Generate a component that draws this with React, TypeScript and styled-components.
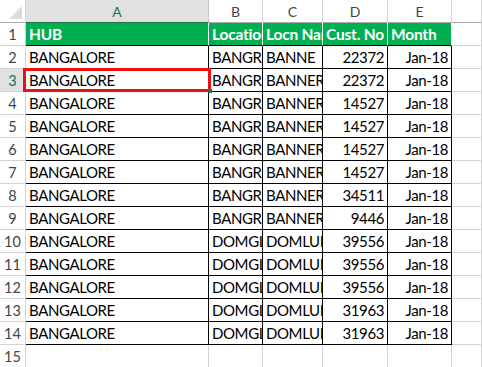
import React from "react";
import styled, { createGlobalStyle } from "styled-components";

const GlobalStyle = createGlobalStyle`
  html, body {
    margin: 0;
    padding: 0;
    background: #ffffff;
  }
`;

const columns = ["A", "B", "C", "D", "E", ""];

const headers = ["HUB", "Location", "Locn Name", "Cust. No", "Month"];

const rows: [string, string, string, string, string][] = [
  ["BANGALORE", "BANGRD", "BANNE", "22372", "Jan-18"],
  ["BANGALORE", "BANGRD", "BANNERG", "22372", "Jan-18"],
  ["BANGALORE", "BANGRD", "BANNERG", "14527", "Jan-18"],
  ["BANGALORE", "BANGRD", "BANNERG", "14527", "Jan-18"],
  ["BANGALORE", "BANGRD", "BANNERG", "14527", "Jan-18"],
  ["BANGALORE", "BANGRD", "BANNERG", "14527", "Jan-18"],
  ["BANGALORE", "BANGRD", "BANNERG", "34511", "Jan-18"],
  ["BANGALORE", "BANGRD", "BANNERG", "9446", "Jan-18"],
  ["BANGALORE", "DOMGLR", "DOMLUR", "39556", "Jan-18"],
  ["BANGALORE", "DOMGLR", "DOMLUR", "39556", "Jan-18"],
  ["BANGALORE", "DOMGLR", "DOMLUR", "39556", "Jan-18"],
  ["BANGALORE", "DOMGLR", "DOMLUR", "31963", "Jan-18"],
  ["BANGALORE", "DOMGLR", "DOMLUR", "31963", "Jan-18"],
];

const Sheet = styled.div`
  position: relative;
  display: grid;
  grid-template-columns: 26px 183px 54px 60px 65px 64px 30px;
  grid-auto-rows: 23px;
  width: 482px;
  height: 367px;
  overflow: hidden;
  font-family: Lato, "Open Sans", sans-serif;
`;

const Corner = styled.div`
  position: relative;
  box-sizing: border-box;
  background: #ffffff;
  border-right: 1px solid #d4d4d4;
  border-bottom: 1px solid #ababab;

  &::after {
    content: "";
    position: absolute;
    right: 3px;
    bottom: 3px;
    border-style: solid;
    border-width: 0 0 13px 13px;
    border-color: transparent transparent #dcdcdc transparent;
  }
`;

const ColHeader = styled.div<{ $selected?: boolean }>`
  box-sizing: border-box;
  display: flex;
  align-items: center;
  justify-content: center;
  font-size: 14px;
  color: ${(p) => (p.$selected ? "#217346" : "#444444")};
  background: ${(p) => (p.$selected ? "#e1e1e1" : "#ffffff")};
  border-right: 1px solid ${(p) => (p.$selected ? "#c6c6c6" : "#d4d4d4")};
  border-bottom: 1px solid ${(p) => (p.$selected ? "#217346" : "#ababab")};
`;

const RowHeader = styled.div<{ $selected?: boolean }>`
  box-sizing: border-box;
  display: flex;
  align-items: center;
  justify-content: center;
  font-size: 14.5px;
  color: ${(p) => (p.$selected ? "#217346" : "#444444")};
  background: ${(p) => (p.$selected ? "#e1e1e1" : "#ffffff")};
  border-right: 1px solid #d4d4d4;
  border-bottom: 1px solid #d4d4d4;
`;

const Cell = styled.div<{ $kind: "head" | "data" | "empty"; $right?: boolean }>`
  box-sizing: border-box;
  display: flex;
  align-items: center;
  justify-content: ${(p) => (p.$right ? "flex-end" : "flex-start")};
  padding: 0 3px 1px 3px;
  overflow: hidden;
  white-space: nowrap;
  font-size: ${(p) => (p.$kind === "head" ? "15.5px" : "15px")};
  letter-spacing: ${(p) => (p.$kind === "head" ? "-0.2px" : "-0.4px")};
  font-weight: ${(p) => (p.$kind === "head" ? 700 : 400)};
  color: ${(p) => (p.$kind === "head" ? "#ffffff" : "#000000")};
  background: ${(p) => (p.$kind === "head" ? "#00b050" : "#ffffff")};
  border-right: 1px solid
    ${(p) => (p.$kind === "head" ? "#ffffff" : p.$kind === "data" ? "#000000" : "#d4d4d4")};
  border-bottom: 1px solid ${(p) => (p.$kind === "empty" ? "#d4d4d4" : "#000000")};
`;

const Selection = styled.div`
  position: absolute;
  left: 23px;
  top: 68px;
  width: 188px;
  height: 24px;
  box-sizing: border-box;
  border: 3px solid #ee1111;
  pointer-events: none;

  &::after {
    content: "";
    position: absolute;
    right: -4px;
    bottom: -4px;
    width: 4px;
    height: 4px;
    background: #217346;
  }
`;

export default function App() {
  return (
    <>
      <GlobalStyle />
      <Sheet>
        <Corner />
        {columns.map((c) => (
          <ColHeader key={"col" + c} $selected={c === "A"}>
            {c}
          </ColHeader>
        ))}

        <RowHeader>1</RowHeader>
        {headers.map((h) => (
          <Cell key={h} $kind="head">
            {h}
          </Cell>
        ))}
        <Cell $kind="empty" />

        {rows.map((r, i) => (
          <React.Fragment key={i}>
            <RowHeader $selected={i === 1}>{i + 2}</RowHeader>
            <Cell $kind="data">{r[0]}</Cell>
            <Cell $kind="data">{r[1]}</Cell>
            <Cell $kind="data">{r[2]}</Cell>
            <Cell $kind="data" $right>
              {r[3]}
            </Cell>
            <Cell $kind="data" $right>
              {r[4]}
            </Cell>
            <Cell $kind="empty" />
          </React.Fragment>
        ))}

        <RowHeader>15</RowHeader>
        {[0, 1, 2, 3, 4, 5].map((k) => (
          <Cell key={"e" + k} $kind="empty" />
        ))}

        <Selection />
      </Sheet>
    </>
  );
}
